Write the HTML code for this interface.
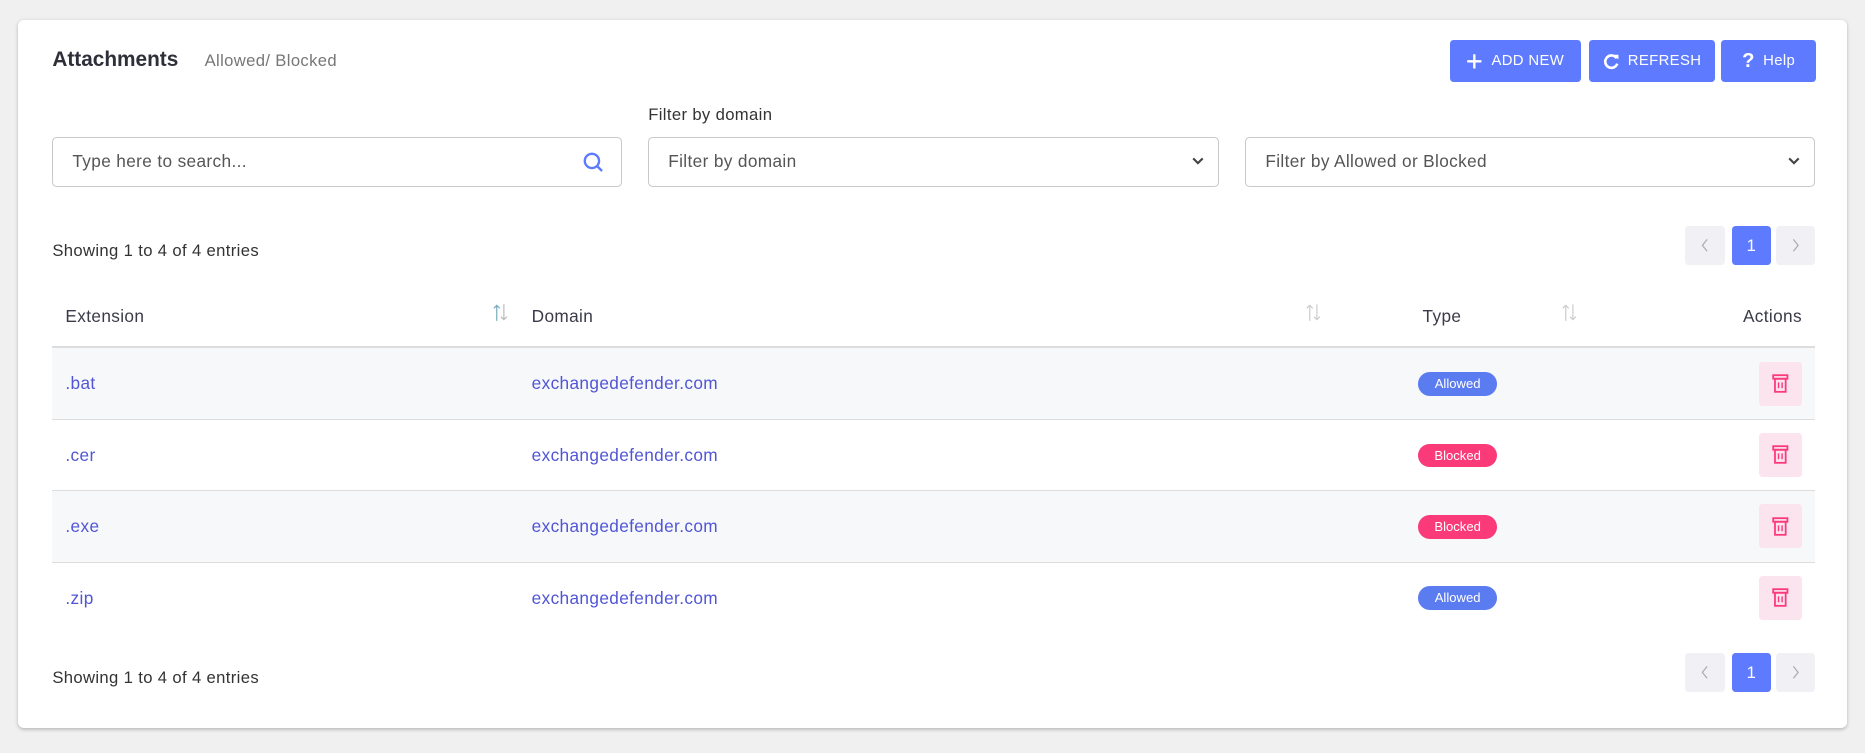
<!DOCTYPE html>
<html><head><meta charset="utf-8"><style>
html,body{margin:0;padding:0;background:#f0f0f0;}
body{width:1568px;height:633px;zoom:1.18941;position:relative;overflow:hidden;font-family:"Liberation Sans",sans-serif;color:#333;letter-spacing:0.3px;}
.card{position:absolute;left:15px;top:17px;width:1538px;height:595px;background:#fff;border-radius:5px;box-shadow:0 1px 3px rgba(0,0,0,.25);}
.abs{position:absolute;}
.title{left:44px;top:40px;font-size:17.5px;color:#2f2f3a;font-weight:bold;letter-spacing:0;}
.sub{left:172px;top:43px;font-size:14px;color:#777;}
.btn{position:absolute;top:34px;height:35px;background:#5e7bff;border-radius:3px;color:#fff;font-size:12.5px;display:flex;align-items:center;justify-content:center;gap:7px;}
.input{position:absolute;top:115px;height:42px;border:1px solid #c9c9c9;border-radius:4px;box-sizing:border-box;font-size:14.5px;color:#555;padding-left:16px;line-height:40px;}
.chev{position:absolute;right:12px;top:15px;}
.show{left:44px;font-size:14px;color:#333;}
.pg{position:absolute;width:33px;height:33px;border-radius:3px;background:#f1f1f5;color:#999;font-size:14px;display:flex;align-items:center;justify-content:center;}
.pg.a{background:#5e7bff;color:#fff;}
.th{position:absolute;top:257px;font-size:14.5px;color:#3a3a48;}
.sort{position:absolute;top:255px;}
.row{position:absolute;left:44px;width:1482px;height:60px;border-bottom:1px solid #ddd;box-sizing:border-box;}
.row.o{background:#f7f8fa;}
.ext{position:absolute;left:11px;top:21px;font-size:14.5px;color:#5055d6;}
.dom{position:absolute;left:403px;top:21px;font-size:14.5px;color:#5055d6;}
.badge{position:absolute;left:1148px;top:20px;width:67px;height:20px;border-radius:10px;color:#fff;font-size:11px;text-align:center;line-height:20px;letter-spacing:0;}
.al{background:#5b7cf0;}.bl{background:#fb3a7a;}
.del{position:absolute;left:1435px;top:11px;width:36px;height:37px;border-radius:3px;background:#fbe4ee;display:flex;align-items:center;justify-content:center;}
</style></head><body>
<div class="card"></div>
<div class="abs title">Attachments</div>
<div class="abs sub">Allowed/ Blocked</div>
<div class="btn" style="left:1219px;width:110px"><svg width="14" height="14" viewBox="0 0 14 14"><path d="M7 1v12M1 7h12" stroke="#fff" stroke-width="2"/></svg>ADD NEW</div>
<div class="btn" style="left:1336px;width:106px"><svg width="14" height="14" viewBox="0 0 14 14"><path d="M11.5 4.5A5.2 5.2 0 1 0 12 9" stroke="#fff" stroke-width="2.2" fill="none"/><path d="M9 1.5h4v4z" fill="#fff"/></svg>REFRESH</div>
<div class="btn" style="left:1447px;width:80px"><b style="font-size:17px">?</b>Help</div>
<div class="abs" style="left:545px;top:88px;font-size:14px;color:#333">Filter by domain</div>
<div class="input" style="left:44px;width:479px">Type here to search...<svg class="abs" style="right:14px;top:12px" width="18" height="18" viewBox="0 0 18 18"><circle cx="7.5" cy="7.5" r="6" stroke="#5e7bff" stroke-width="2" fill="none"/><path d="M12 12l4 4" stroke="#5e7bff" stroke-width="2"/></svg></div>
<div class="input" style="left:545px;width:480px">Filter by domain<svg class="chev" width="10" height="8" viewBox="0 0 10 8"><path d="M1 2l4 4 4-4" stroke="#444" stroke-width="1.8" fill="none"/></svg></div>
<div class="input" style="left:1047px;width:479px">Filter by Allowed or Blocked<svg class="chev" width="10" height="8" viewBox="0 0 10 8"><path d="M1 2l4 4 4-4" stroke="#444" stroke-width="1.8" fill="none"/></svg></div>
<div class="abs show" style="top:203px">Showing 1 to 4 of 4 entries</div>
<div class="pg" style="left:1417px;top:190px"><svg width="8" height="14" viewBox="0 0 8 14"><path d="M6 2L2 7l4 5" stroke="#aaa" fill="none"/></svg></div><div class="pg a" style="left:1456px;top:190px">1</div><div class="pg" style="left:1493px;top:190px"><svg width="8" height="14" viewBox="0 0 8 14"><path d="M2 2l4 5-4 5" stroke="#aaa" fill="none"/></svg></div>
<div class="th" style="left:55px">Extension</div><svg class="sort" style="left:414px" width="14" height="16" viewBox="0 0 14 16"><path d="M4 15V2M1.5 4.5L4 2l2.5 2.5" stroke="#7ab" fill="none"/><path d="M10 1v13M7.5 11.5L10 14l2.5-2.5" stroke="#bbb" fill="none"/></svg>
<div class="th" style="left:447px">Domain</div><svg class="sort" style="left:1097px" width="14" height="16" viewBox="0 0 14 16"><path d="M4 15V2M1.5 4.5L4 2l2.5 2.5M10 1v13M7.5 11.5L10 14l2.5-2.5" stroke="#ccc" fill="none"/></svg>
<div class="th" style="left:1196px">Type</div><svg class="sort" style="left:1312px" width="14" height="16" viewBox="0 0 14 16"><path d="M4 15V2M1.5 4.5L4 2l2.5 2.5M10 1v13M7.5 11.5L10 14l2.5-2.5" stroke="#ccc" fill="none"/></svg>
<div class="th" style="right:53px">Actions</div>
<div class="abs" style="left:44px;top:291px;width:1482px;height:2px;background:#ddd"></div>
<div class="row o" style="top:293px"><div class="ext">.bat</div><div class="dom">exchangedefender.com</div><div class="badge al">Allowed</div><div class="del"><svg width="14" height="16" viewBox="0 0 14 16"><rect x="1" y="1" width="12" height="3" fill="none" stroke="#fb3a7a" stroke-width="1.5"/><rect x="2.5" y="4" width="9" height="11" fill="none" stroke="#fb3a7a" stroke-width="1.5"/><path d="M5.5 7v5M8.5 7v5" stroke="#fb3a7a" stroke-width="1.2"/></svg></div></div>
<div class="row" style="top:353px"><div class="ext">.cer</div><div class="dom">exchangedefender.com</div><div class="badge bl">Blocked</div><div class="del"><svg width="14" height="16" viewBox="0 0 14 16"><rect x="1" y="1" width="12" height="3" fill="none" stroke="#fb3a7a" stroke-width="1.5"/><rect x="2.5" y="4" width="9" height="11" fill="none" stroke="#fb3a7a" stroke-width="1.5"/><path d="M5.5 7v5M8.5 7v5" stroke="#fb3a7a" stroke-width="1.2"/></svg></div></div>
<div class="row o" style="top:413px"><div class="ext">.exe</div><div class="dom">exchangedefender.com</div><div class="badge bl">Blocked</div><div class="del"><svg width="14" height="16" viewBox="0 0 14 16"><rect x="1" y="1" width="12" height="3" fill="none" stroke="#fb3a7a" stroke-width="1.5"/><rect x="2.5" y="4" width="9" height="11" fill="none" stroke="#fb3a7a" stroke-width="1.5"/><path d="M5.5 7v5M8.5 7v5" stroke="#fb3a7a" stroke-width="1.2"/></svg></div></div>
<div class="row" style="top:473px;border-bottom:none"><div class="ext">.zip</div><div class="dom">exchangedefender.com</div><div class="badge al">Allowed</div><div class="del"><svg width="14" height="16" viewBox="0 0 14 16"><rect x="1" y="1" width="12" height="3" fill="none" stroke="#fb3a7a" stroke-width="1.5"/><rect x="2.5" y="4" width="9" height="11" fill="none" stroke="#fb3a7a" stroke-width="1.5"/><path d="M5.5 7v5M8.5 7v5" stroke="#fb3a7a" stroke-width="1.2"/></svg></div></div>
<div class="abs show" style="top:562px">Showing 1 to 4 of 4 entries</div>
<div class="pg" style="left:1417px;top:549px"><svg width="8" height="14" viewBox="0 0 8 14"><path d="M6 2L2 7l4 5" stroke="#aaa" fill="none"/></svg></div><div class="pg a" style="left:1456px;top:549px">1</div><div class="pg" style="left:1493px;top:549px"><svg width="8" height="14" viewBox="0 0 8 14"><path d="M2 2l4 5-4 5" stroke="#aaa" fill="none"/></svg></div>
</body></html>
